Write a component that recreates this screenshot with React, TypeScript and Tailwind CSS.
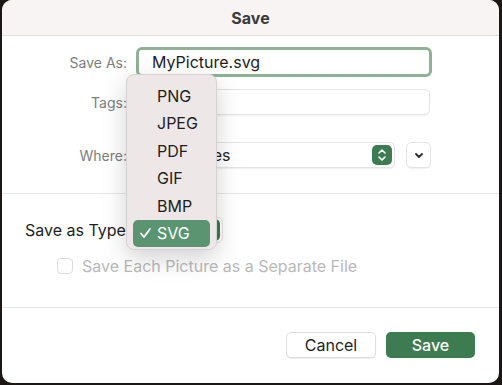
import React from 'react';

const types = ['PNG', 'JPEG', 'PDF', 'GIF', 'BMP', 'SVG'];

const Stepper: React.FC<{ className?: string }> = ({ className }) => (
  <div className={`flex items-center justify-center rounded-[5px] bg-[#3d7b50] ${className ?? ''}`}>
    <svg width="10" height="14" viewBox="0 0 10 14" fill="none" stroke="white" strokeWidth="1.6" strokeLinecap="round" strokeLinejoin="round">
      <polyline points="2,5 5,2 8,5" />
      <polyline points="2,9 5,12 8,9" />
    </svg>
  </div>
);

const App: React.FC = () => {
  return (
    <div className="w-[502px] h-[385px] bg-[#1c1714] pl-[2px] pr-[3px] pb-[2px] font-['Inter','Liberation_Sans',sans-serif]">
      <div className="relative flex flex-col h-full bg-white rounded-[10px] overflow-hidden">
        {/* Title */}
        <div className="h-[36px] shrink-0 flex items-center justify-center bg-[#f7f4f3] border-b border-[#e2dedd] text-[16px] font-bold text-[#3a3a3a]">
          Save
        </div>

        {/* Form */}
        <div className="grid grid-cols-[125px_1fr] gap-x-[9px] items-center pt-[11px] pb-[25px] text-[14px] text-[#7d7d7d]">
          <div className="text-right">Save As:</div>
          <div className="w-[296px] h-[30px] rounded-[6px] border-[3px] border-[#8fb195] flex items-center pl-[13px] text-[16px] text-[#1e1e1e]">
            MyPicture.svg
          </div>

          <div className="text-right mt-[12px]">Tags:</div>
          <div className="ml-[1px] mt-[12px] w-[293px] h-[26px] rounded-[5px] border border-[#e4e4e4] shadow-[0_1px_1px_rgba(0,0,0,0.05)]" />

          <div className="text-right mt-[27px]">Where:</div>
          <div className="mt-[27px] flex items-center gap-[11px]">
            <div className="w-[259px] h-[26px] rounded-[5px] border border-[#e4e4e4] shadow-[0_1px_1px_rgba(0,0,0,0.06)] flex items-center justify-between pl-[8px] pr-[2px] text-[16px] text-[#1e1e1e]">
              <span className="flex items-center gap-[6px]">
                <svg width="18" height="14" viewBox="0 0 18 14">
                  <path d="M1 2.5a1.5 1.5 0 0 1 1.5-1.5h4l1.5 1.5h7.5A1.5 1.5 0 0 1 17 4v7.5a1.5 1.5 0 0 1-1.5 1.5h-13A1.5 1.5 0 0 1 1 11.5z" fill="#5aa9e6" />
                </svg>
                <span>Pictures</span>
              </span>
              <Stepper className="w-[20px] h-[20px]" />
            </div>
            <div className="w-[25px] h-[26px] rounded-[5px] border border-[#e4e4e4] shadow-[0_1px_1px_rgba(0,0,0,0.06)] flex items-center justify-center">
              <svg width="10" height="7" viewBox="0 0 10 7" fill="none" stroke="#2a2a2a" strokeWidth="1.8" strokeLinecap="round" strokeLinejoin="round">
                <polyline points="2,2 5,5 8,2" />
              </svg>
            </div>
          </div>
        </div>

        {/* Options */}
        <div className="border-t border-[#e6e6e6] pt-[23px] pl-[23px] h-[114px]">
          <div className="flex items-center gap-[10px] h-[26px]">
            <span className="text-[16px] text-[#1e1e1e]">Save as Type</span>
            <div className="w-[87px] h-[26px] rounded-[5px] border border-[#e4e4e4] flex items-center justify-end pr-[2px]">
              <Stepper className="w-[20px] h-[22px]" />
            </div>
          </div>
          <div className="flex items-center gap-[9px] mt-[11px] pl-[32px]">
            <div className="w-[16px] h-[16px] rounded-[4px] border border-[#dcdcdc]" />
            <span className="text-[16px] text-[#b9b9b9]">Save Each Picture as a Separate File</span>
          </div>
        </div>

        {/* Footer */}
        <div className="flex-1 border-t border-[#e6e6e6] flex items-end justify-end gap-[10px] pr-[24px] pb-[25px]">
          <button className="w-[90px] h-[26px] rounded-[5px] bg-white border border-[#dedede] shadow-[0_1px_1px_rgba(0,0,0,0.08)] text-[16px] text-[#1e1e1e]">
            Cancel
          </button>
          <button className="w-[89px] h-[26px] rounded-[5px] bg-[#3d7b50] text-[16px] text-white font-medium">
            Save
          </button>
        </div>

        {/* Type menu */}
        <div className="absolute left-[124px] top-[74px] w-[91px] rounded-[8px] bg-[#ede8e7] border border-[#d7d2d1] shadow-[0_8px_24px_rgba(0,0,0,0.18)] pt-[7px] pb-[2px] px-[6px]">
          {types.map((t) => (
            <div
              key={t}
              className={`h-[27.5px] flex items-center rounded-[5px] text-[16px] ${
                t === 'SVG' ? 'bg-[#5b9470] text-white' : 'text-[#1e1e1e]'
              }`}
            >
              <span className="w-[24px] flex justify-center">
                {t === 'SVG' && (
                  <svg width="13" height="12" viewBox="0 0 13 12" fill="none" stroke="white" strokeWidth="1.8" strokeLinecap="round" strokeLinejoin="round">
                    <polyline points="2,6.5 5,10 11,2" />
                  </svg>
                )}
              </span>
              <span>{t}</span>
            </div>
          ))}
        </div>
      </div>
    </div>
  );
};

export default App;
